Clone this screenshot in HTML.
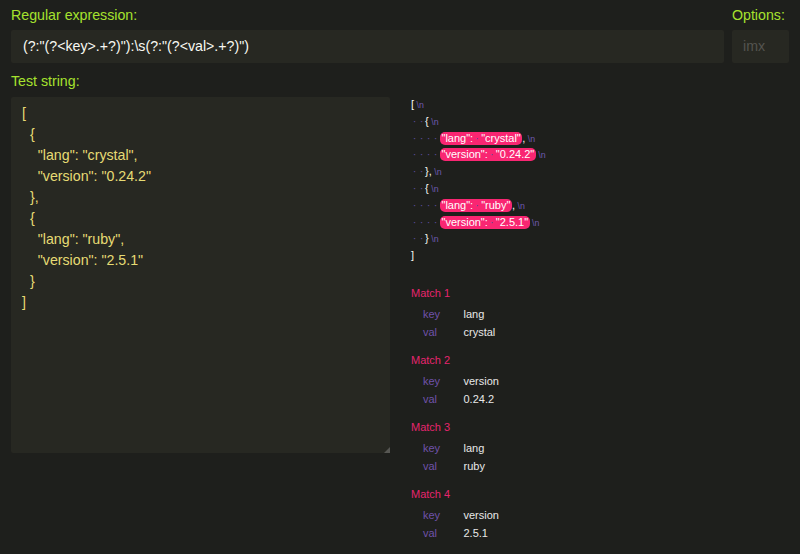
<!DOCTYPE html>
<html><head><meta charset="utf-8">
<style>
html,body{margin:0;padding:0;background:#1e1f1c;width:800px;height:554px;overflow:hidden;font-family:"Liberation Sans",sans-serif;}
.lbl{position:absolute;color:#a6e22e;font-size:14.2px;line-height:16px;white-space:nowrap;}
.box{position:absolute;background:#272822;border-radius:2px;}
.re{color:#f8f8f2;font-size:14.2px;line-height:16px;position:absolute;white-space:nowrap;}
textarea{position:absolute;left:11px;top:97px;width:379px;height:356px;box-sizing:border-box;margin:0;border:0;outline:0;background:#272822;border-radius:2px;color:#e6db74;font-family:"Liberation Sans",sans-serif;font-size:14.2px;line-height:21px;padding:6px 11px;resize:none;overflow:hidden;}
.res{position:absolute;left:411px;top:96px;font-size:11px;line-height:16.8px;white-space:nowrap;color:#f8f8f2;}
.row{height:16.8px;}
.s{display:inline-block;width:7px;text-align:center;color:#5a4d9c;}
.nl{color:#6e5aae;font-size:8.8px;margin-left:2.5px;}
.hl{background:#f92672;border-radius:5px;color:#fff;padding:0 1.5px 1px 1.5px;margin-left:1px;}
.hl .s{width:8px;}
.m{position:absolute;font-size:11px;line-height:13px;white-space:nowrap;}
.mt{color:#e6256e;}
.k{color:#7052aa;}
.v{color:#e8e8e8;}
</style></head><body>
<div class="lbl" style="left:11px;top:7px;">Regular expression:</div>
<div class="lbl" style="left:732px;top:7px;">Options:</div>
<div class="box" style="left:11px;top:30px;width:713px;height:33px;"></div>
<div class="re" style="left:23px;top:38px;">(?:"(?&lt;key&gt;.+?)"):\s(?:"(?&lt;val&gt;.+?)")</div>
<div class="box" style="left:732px;top:30px;width:57px;height:33px;"></div>
<div class="re" style="left:743px;top:38px;color:#54544f;">imx</div>
<div class="lbl" style="left:11px;top:73px;">Test string:</div>
<textarea spellcheck="false">[
  {
    "lang": "crystal",
    "version": "0.24.2"
  },
  {
    "lang": "ruby",
    "version": "2.5.1"
  }
]</textarea>
<svg style="position:absolute;left:384px;top:447px;" width="6" height="6"><polygon points="0,6 6,6 6,0" fill="#575753"/></svg>
<div class="res">
<div class="row">[<span class="nl">\n</span></div>
<div class="row"><span class="s">·</span><span class="s">·</span>{<span class="nl">\n</span></div>
<div class="row"><span class="s">·</span><span class="s">·</span><span class="s">·</span><span class="s">·</span><span class="hl">"lang":<span class="s">·</span>"crystal"</span>,<span class="nl">\n</span></div>
<div class="row"><span class="s">·</span><span class="s">·</span><span class="s">·</span><span class="s">·</span><span class="hl">"version":<span class="s">·</span>"0.24.2"</span><span class="nl">\n</span></div>
<div class="row"><span class="s">·</span><span class="s">·</span>},<span class="nl">\n</span></div>
<div class="row"><span class="s">·</span><span class="s">·</span>{<span class="nl">\n</span></div>
<div class="row"><span class="s">·</span><span class="s">·</span><span class="s">·</span><span class="s">·</span><span class="hl">"lang":<span class="s">·</span>"ruby"</span>,<span class="nl">\n</span></div>
<div class="row"><span class="s">·</span><span class="s">·</span><span class="s">·</span><span class="s">·</span><span class="hl">"version":<span class="s">·</span>"2.5.1"</span><span class="nl">\n</span></div>
<div class="row"><span class="s">·</span><span class="s">·</span>}<span class="nl">\n</span></div>
<div class="row">]</div>
</div>

<div class="m mt" style="left:411px;top:287px;">Match 1</div>
<div class="m k" style="left:423px;top:308px;">key</div>
<div class="m v" style="left:463.5px;top:308px;">lang</div>
<div class="m k" style="left:423px;top:326px;">val</div>
<div class="m v" style="left:463.5px;top:326px;">crystal</div>

<div class="m mt" style="left:411px;top:354px;">Match 2</div>
<div class="m k" style="left:423px;top:375px;">key</div>
<div class="m v" style="left:463.5px;top:375px;">version</div>
<div class="m k" style="left:423px;top:393px;">val</div>
<div class="m v" style="left:463.5px;top:393px;">0.24.2</div>

<div class="m mt" style="left:411px;top:420.5px;">Match 3</div>
<div class="m k" style="left:423px;top:441.5px;">key</div>
<div class="m v" style="left:463.5px;top:441.5px;">lang</div>
<div class="m k" style="left:423px;top:460px;">val</div>
<div class="m v" style="left:463.5px;top:460px;">ruby</div>

<div class="m mt" style="left:411px;top:487.5px;">Match 4</div>
<div class="m k" style="left:423px;top:508.5px;">key</div>
<div class="m v" style="left:463.5px;top:508.5px;">version</div>
<div class="m k" style="left:423px;top:527px;">val</div>
<div class="m v" style="left:463.5px;top:527px;">2.5.1</div>
</body></html>
